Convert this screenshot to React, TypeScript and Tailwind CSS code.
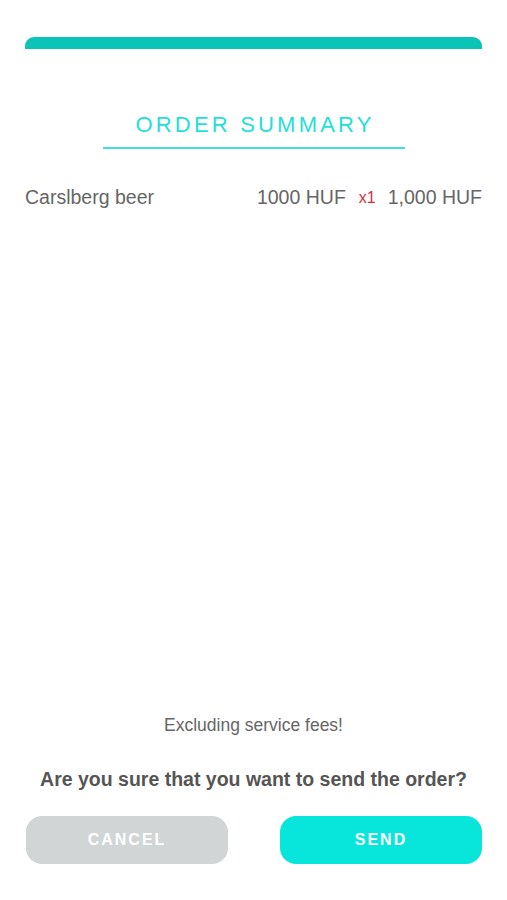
import React from "react";

const App = () => {
  return (
    <div
      className="h-[900px] w-full bg-white flex flex-col px-[25px] pt-[37px] pb-[36px]"
      style={{ fontFamily: '"Liberation Sans", Arial, sans-serif' }}
    >
      <div className="h-[12px] w-full rounded-t-[9px] bg-[#0bc4b8]" />

      <div className="flex flex-col items-center mt-[62px]">
        <h1 className="text-[22px] leading-[28px] tracking-[3.2px] text-[#1fe0d8] pl-[3px]">
          ORDER SUMMARY
        </h1>
        <div className="h-[2px] w-[302px] bg-[#45dfd9] mt-[8px]" />
      </div>

      <div className="flex flex-row justify-between items-center mt-[34px] text-[19.5px] text-[#666666]">
        <span>Carslberg beer</span>
        <div className="flex flex-row items-center">
          <span>1000 HUF</span>
          <span className="text-[16px] text-[#d2323f] ml-[13px] mr-[12px]">x1</span>
          <span>1,000 HUF</span>
        </div>
      </div>

      <div className="flex-1" />

      <p className="text-center text-[17.5px] text-[#666666]">Excluding service fees!</p>
      <p className="text-center text-[19.5px] font-bold text-[#555555] mt-[27px]">
        Are you sure that you want to send the order?
      </p>

      <div className="flex flex-row justify-between mt-[22px] pl-[1px]">
        <button className="w-[202px] h-[48px] rounded-[16px] bg-[#d1d5d5] text-white text-[16px] font-semibold tracking-[2px]">
          CANCEL
        </button>
        <button className="w-[202px] h-[48px] rounded-[16px] bg-[#08e6dc] text-white text-[16px] font-semibold tracking-[2px]">
          SEND
        </button>
      </div>
    </div>
  );
};

export default App;
